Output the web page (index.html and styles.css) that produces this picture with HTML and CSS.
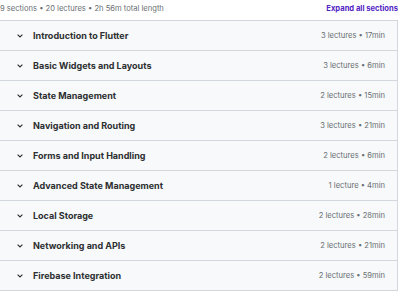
FILE: index.html
```html
<!DOCTYPE html>
<html lang="en">
<head>
  <meta charset="UTF-8" />
  <meta name="viewport" content="width=device-width, initial-scale=1" />
  <title>Course content</title>
  <link rel="stylesheet" href="styles.css">
</head>
<body>
  <div class="summary">
    <span class="stats">9 sections • 20 lectures • 2h 56m total length</span>
    <a href="#" class="expand">Expand all sections</a>
  </div>

  <div class="sections">
    <div class="section">
      <span class="chevron"><svg width="6" height="6" viewBox="0 0 6 6"><path d="M0.6 1.6 L3 4 L5.4 1.6" fill="none" stroke="#2d2f31" stroke-width="1.1"/></svg></span>
      <span class="title">Introduction to Flutter</span>
      <span class="meta">3 lectures • 17min</span>
    </div>
    <div class="section">
      <span class="chevron"><svg width="6" height="6" viewBox="0 0 6 6"><path d="M0.6 1.6 L3 4 L5.4 1.6" fill="none" stroke="#2d2f31" stroke-width="1.1"/></svg></span>
      <span class="title">Basic Widgets and Layouts</span>
      <span class="meta">3 lectures • 6min</span>
    </div>
    <div class="section">
      <span class="chevron"><svg width="6" height="6" viewBox="0 0 6 6"><path d="M0.6 1.6 L3 4 L5.4 1.6" fill="none" stroke="#2d2f31" stroke-width="1.1"/></svg></span>
      <span class="title">State Management</span>
      <span class="meta">2 lectures • 15min</span>
    </div>
    <div class="section">
      <span class="chevron"><svg width="6" height="6" viewBox="0 0 6 6"><path d="M0.6 1.6 L3 4 L5.4 1.6" fill="none" stroke="#2d2f31" stroke-width="1.1"/></svg></span>
      <span class="title">Navigation and Routing</span>
      <span class="meta">3 lectures • 21min</span>
    </div>
    <div class="section">
      <span class="chevron"><svg width="6" height="6" viewBox="0 0 6 6"><path d="M0.6 1.6 L3 4 L5.4 1.6" fill="none" stroke="#2d2f31" stroke-width="1.1"/></svg></span>
      <span class="title">Forms and Input Handling</span>
      <span class="meta">2 lectures • 6min</span>
    </div>
    <div class="section">
      <span class="chevron"><svg width="6" height="6" viewBox="0 0 6 6"><path d="M0.6 1.6 L3 4 L5.4 1.6" fill="none" stroke="#2d2f31" stroke-width="1.1"/></svg></span>
      <span class="title">Advanced State Management</span>
      <span class="meta">1 lecture • 4min</span>
    </div>
    <div class="section">
      <span class="chevron"><svg width="6" height="6" viewBox="0 0 6 6"><path d="M0.6 1.6 L3 4 L5.4 1.6" fill="none" stroke="#2d2f31" stroke-width="1.1"/></svg></span>
      <span class="title">Local Storage</span>
      <span class="meta">2 lectures • 28min</span>
    </div>
    <div class="section">
      <span class="chevron"><svg width="6" height="6" viewBox="0 0 6 6"><path d="M0.6 1.6 L3 4 L5.4 1.6" fill="none" stroke="#2d2f31" stroke-width="1.1"/></svg></span>
      <span class="title">Networking and APIs</span>
      <span class="meta">2 lectures • 21min</span>
    </div>
    <div class="section">
      <span class="chevron"><svg width="6" height="6" viewBox="0 0 6 6"><path d="M0.6 1.6 L3 4 L5.4 1.6" fill="none" stroke="#2d2f31" stroke-width="1.1"/></svg></span>
      <span class="title">Firebase Integration</span>
      <span class="meta">2 lectures • 59min</span>
    </div>
  </div>
</body>
</html>
```

FILE: styles.css
```css
body {
  font-family: 'Inter', sans-serif;
  margin: 0;
  padding: 0;
  width: 398px;
  background-color: #ffffff;
  color: #2d2f31;
}
.summary {
  display: flex;
  justify-content: space-between;
  align-items: center;
  height: 20px;
  font-size: 7.6px;
}
.stats {
  color: #6a6f73;
  margin-top: -3px;
}
.expand {
  color: #5022c3;
  font-weight: 700;
  text-decoration: none;
  margin-top: -3px;
}
.sections {
  border: 1px solid #d1d7dc;
  border-left: none;
  border-bottom: none;
}
.section {
  display: flex;
  align-items: center;
  height: 29px;
  padding: 0 12px 0 17px;
  background-color: #f7f9fa;
  border-bottom: 1px solid #d1d7dc;
}
.chevron {
  display: flex;
  width: 6px;
  margin-right: 10px;
}
.title {
  flex: 1;
  font-size: 9px;
  font-weight: 700;
}
.meta {
  font-size: 7.6px;
  color: #6a6f73;
}
```
